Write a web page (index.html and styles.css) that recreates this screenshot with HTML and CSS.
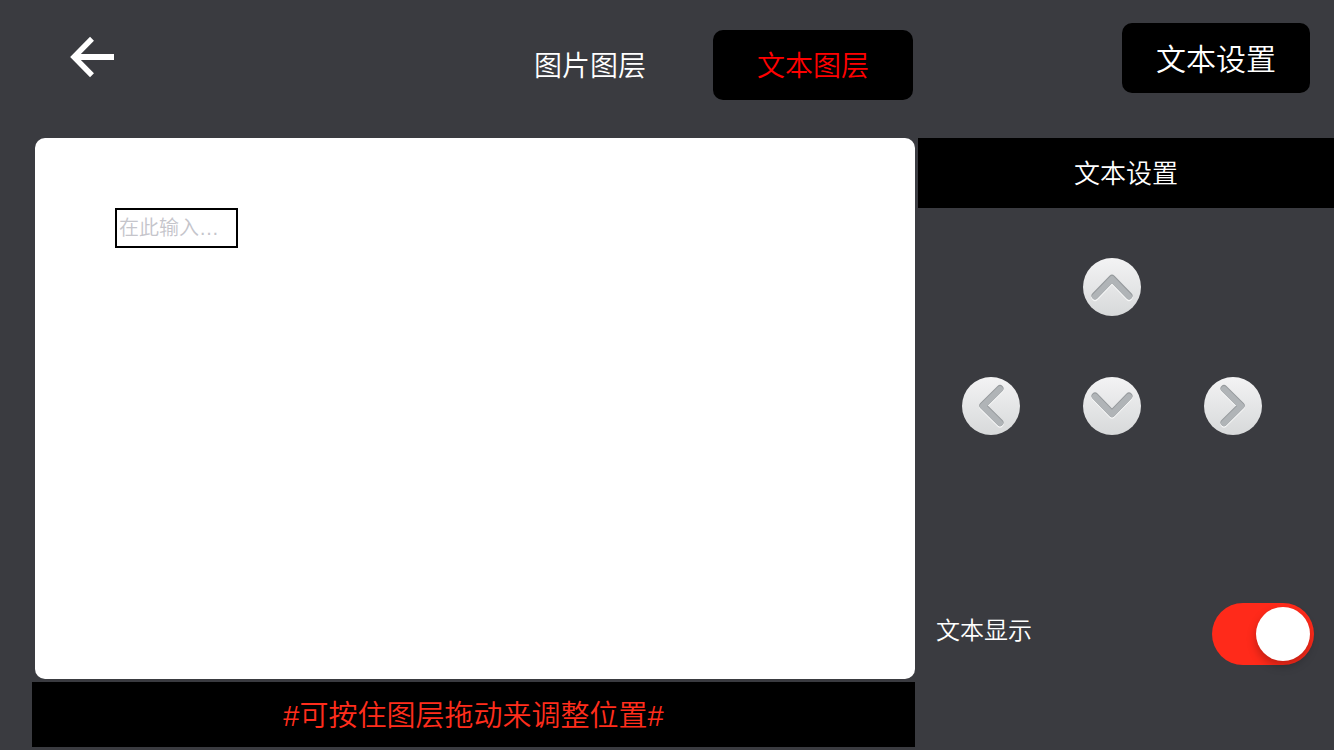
FILE: index.html
```html
<!DOCTYPE html>
<html lang="zh-CN">
<head>
  <meta charset="UTF-8" />
  <title>文本图层</title>
  <meta name="viewport" content="width=device-width, initial-scale=1.0" />
  <link rel="stylesheet" href="styles.css">
</head>
<body>

  <header class="topbar">
    <div class="topbar-left">
      <button class="back" type="button" aria-label="返回">
        <svg width="44" height="42" viewBox="0 0 44 42" fill="none" stroke="#fff">
          <path d="M22 2.7 L4 21 L22 39.3" stroke-width="5.5" />
          <path d="M4 21 H44" stroke-width="6" />
        </svg>
      </button>
      <nav class="tabs">
        <button class="tab" type="button">图片图层</button>
        <button class="tab active" type="button">文本图层</button>
      </nav>
    </div>
    <button class="settings" type="button">文本设置</button>
  </header>

  <main class="editor">
    <section class="stage">
      <div class="canvas">
        <input class="layer-text" type="text" placeholder="在此输入…" aria-label="文本图层内容" />
      </div>
      <p class="hint">#可按住图层拖动来调整位置#</p>
    </section>

    <aside class="panel">
      <h2 class="panel-title">文本设置</h2>

      <!-- move the layer around -->
      <div class="dpad">
        <button class="move up" type="button" aria-label="上移">
          <svg viewBox="0 0 58 58"><path class="shine" d="M12 39.5 L29 21.8 L46 39.5" /><path class="edge" d="M12 37.8 L29 20.3 L46 37.8" /><path class="mark" d="M12 38.5 L29 21 L46 38.5" /></svg>
        </button>
        <button class="move left" type="button" aria-label="左移">
          <svg viewBox="0 0 58 58"><path class="shine" d="M38 13 L20.8 30 L38 47" /><path class="edge" d="M38 11.5 L20.8 28.5 L38 45.5" /><path class="mark" d="M38 12.2 L20.8 29.2 L38 46.2" /></svg>
        </button>
        <button class="move down" type="button" aria-label="下移">
          <svg viewBox="0 0 58 58"><path class="shine" d="M12 20.5 L29 38 L46 20.5" /><path class="edge" d="M12 19 L29 36.5 L46 19" /><path class="mark" d="M12 19.7 L29 37.2 L46 19.7" /></svg>
        </button>
        <button class="move right" type="button" aria-label="右移">
          <svg viewBox="0 0 58 58"><path class="shine" d="M20 13 L37.2 30 L20 47" /><path class="edge" d="M20 11.5 L37.2 28.5 L20 45.5" /><path class="mark" d="M20 12.2 L37.2 29.2 L20 46.2" /></svg>
        </button>
      </div>

      <div class="row">
        <label for="showText">文本显示</label>
        <input class="switch" id="showText" type="checkbox" role="switch" checked />
      </div>
    </aside>
  </main>

</body>
</html>
```

FILE: styles.css
```css
* { box-sizing: border-box; margin: 0; padding: 0 }
body {
  min-height: 100vh;
  display: flex; flex-direction: column;
  font-family: "Liberation Sans", "Noto Sans CJK SC", sans-serif;
  font-weight: 350;
  color: #fff;
  background: #3a3b40;
}
button {
  font: inherit; color: inherit;
  background: none; border: none;
  cursor: pointer;
}
svg { display: block }

/* Top bar */
.topbar {
  display: grid;
  grid-template-columns: minmax(0, 1fr) 416px;
  gap: 3px;
  align-items: start;
  min-height: 138px;
  padding-top: 23px;
}
.topbar-left {
  display: flex; justify-content: space-between; align-items: flex-start;
  padding: 7px 2px 0 70px;
}
.back { margin-top: 6px }
.tabs { display: flex; gap: 23px }
.tab, .settings {
  height: 70px;
  padding-bottom: 3px;
  border-radius: 10px;
}
.tab { width: 200px; font-size: 28px }
.tab.active { color: #f00; background: #000 }
.settings {
  justify-self: end;
  width: 188px;
  margin-right: 24px;
  font-size: 30px;
  background: #000;
}

/* Editor */
.editor {
  flex: 1;
  display: grid;
  grid-template-columns: minmax(0, 1fr) 416px;
  gap: 3px;
  padding-bottom: 3px;
}
.stage {
  display: flex; flex-direction: column; gap: 3px;
  padding-left: 32px;
}
.canvas {
  flex: 1;
  position: relative;
  min-height: 300px;
  margin-left: 3px;
  border-radius: 10px;
  background: #fff;
}
.layer-text {
  position: absolute; left: 80px; top: 70px;
  width: 123px; height: 40px;
  padding: 0 2px;
  border: 2px solid #000;
  font: inherit; font-size: 20px;
  color: #000; background: transparent;
}
.layer-text::placeholder { color: #c5c5cb; opacity: 1 }
.hint {
  height: 65px;
  padding-top: 2px;
  font-size: 29px; line-height: 65px;
  text-align: center;
  color: #ff2d1c; background: #000;
}

/* Right panel */
.panel { display: flex; flex-direction: column }
.panel-title {
  height: 70px;
  font-size: 26px; font-weight: 350; line-height: 72px;
  text-align: center;
  background: #000;
}
.dpad {
  display: grid;
  grid-template-columns: repeat(3, 58px);
  grid-template-areas: ". up ." "left down right";
  gap: 61px 63px;
  padding: 50px 44px;
}
.up { grid-area: up }
.left { grid-area: left }
.down { grid-area: down }
.right { grid-area: right }
.move {
  width: 58px; height: 58px;
  border-radius: 50%;
  background: linear-gradient(#f3f3f4, #d7d9da);
}
.move path {
  fill: none;
  stroke-width: 7; stroke-linecap: round; stroke-linejoin: round;
}
.move .shine { stroke: #f6f7f7 }
.move .edge { stroke: #969a9d }
.move .mark { stroke: #b0b4b7; stroke-width: 6 }

.row {
  display: flex; justify-content: space-between;
  margin-top: auto;
  padding: 0 20px 82px 18px;
  font-size: 24px; line-height: 56px;
}
.switch {
  appearance: none;
  width: 102px; height: 62px;
  padding: 4px;
  border-radius: 31px;
  background: #88898c;
  cursor: pointer;
}
.switch::before {
  content: '';
  display: block;
  width: 54px; height: 54px;
  border-radius: 50%;
  background: #fff;
  box-shadow: 0 5px 10px rgba(0,0,0,0.25);
}
.switch:checked { background: #ff2a1a }
.switch:checked::before { margin-left: auto }
```
